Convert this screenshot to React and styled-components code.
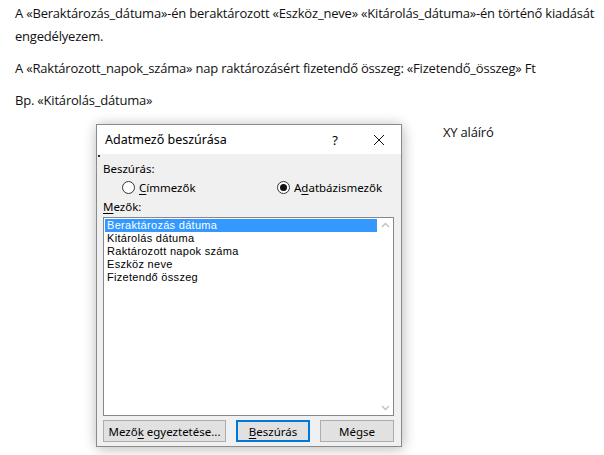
import React, { useState } from "react";
import styled, { createGlobalStyle } from "styled-components";

const GlobalStyle = createGlobalStyle`
  html, body {
    margin: 0;
    padding: 0;
    background: #ffffff;
  }
`;

const Page = styled.div`
  position: relative;
  width: 604px;
  height: 455px;
  overflow: hidden;
  background: #ffffff;
`;

const Doc = styled.div`
  padding: 2px 0 0 15px;
  font-family: "Open Sans", "Liberation Sans", sans-serif;
  font-size: 13px;
  letter-spacing: -0.2px;
  color: #111;
`;

const Para = styled.p`
  margin: 0 0 9px;
  line-height: 23px;
  white-space: nowrap;
  padding-left: ${(p) => p.$indent || 0}px;
`;

const Dialog = styled.div`
  position: absolute;
  left: 96px;
  top: 124px;
  width: 304px;
  height: 321px;
  border: 1px solid #8a8a8a;
  background: #f0f0f0;
  box-shadow: 0 0 12px rgba(0, 0, 0, 0.18), 2px 4px 14px rgba(0, 0, 0, 0.12);
  display: flex;
  flex-direction: column;
  font-family: "Noto Sans", "Liberation Sans", sans-serif;
  font-size: 11.5px;
  color: #000;
`;

const TitleBar = styled.div`
  height: 29px;
  background: #ffffff;
  display: flex;
  align-items: center;
  padding-left: 8px;
`;

const Title = styled.div`
  flex: 1;
  font-size: 12.5px;
  color: #000;
`;

const TitleButton = styled.div`
  width: 44px;
  height: 29px;
  display: flex;
  align-items: center;
  justify-content: center;
  font-size: 13px;
`;

const Body = styled.div`
  position: relative;
  flex: 1;
  display: flex;
  flex-direction: column;
  padding: 7px 7px 7px 6px;
`;

const Dot = styled.span`
  position: absolute;
  left: 1px;
  top: 1px;
  width: 2px;
  height: 2px;
  background: #333;
`;

const Label = styled.div`
  line-height: 16px;
`;

const RadioRow = styled.div`
  display: flex;
  height: 18px;
  align-items: center;
  margin: 1px 0 3px 19px;
`;

const RadioItem = styled.label`
  display: flex;
  align-items: center;
  gap: 4px;
  width: ${(p) => p.$w || "auto"};
`;

const Circle = styled.span`
  width: 11px;
  height: 11px;
  border: 1px solid #333;
  border-radius: 50%;
  background: #fff;
  display: flex;
  align-items: center;
  justify-content: center;

  &::after {
    content: "";
    width: 7px;
    height: 7px;
    border-radius: 50%;
    background: ${(p) => (p.$on ? "#111" : "transparent")};
  }
`;

const Key = styled.span`
  text-decoration: underline;
  text-underline-offset: 2px;
`;

const ListBox = styled.div`
  margin-top: 2px;
  height: 197px;
  border: 1px solid #828790;
  background: #fff;
  display: flex;
`;

const Items = styled.div`
  flex: 1;
  padding: 1px 0 0 1px;
  font-family: "Liberation Sans", "Noto Sans", sans-serif;
  font-size: 11px;
  letter-spacing: 0.3px;
`;

const Item = styled.div`
  height: 13px;
  line-height: 13px;
  padding-left: 2px;
  background: ${(p) => (p.$sel ? "#3399ff" : "transparent")};
  color: ${(p) => (p.$sel ? "#fff" : "#000")};
`;

const Scroll = styled.div`
  width: 16px;
  display: flex;
  flex-direction: column;
  justify-content: space-between;
  align-items: center;
  padding: 4px 0;
`;

const Buttons = styled.div`
  margin-top: 4px;
  display: flex;
  gap: 10px;
`;

const Button = styled.button`
  height: 22px;
  width: ${(p) => p.$w}px;
  padding: 0;
  font-family: inherit;
  font-size: 11.5px;
  color: #000;
  background: #e1e1e1;
  border: ${(p) => (p.$def ? "2px solid #0078d7" : "1px solid #adadad")};
  box-sizing: border-box;
`;

const Chevron = ({ up }) => (
  <svg width="9" height="6" viewBox="0 0 9 6">
    <path
      d={up ? "M1 5 L4.5 1.5 L8 5" : "M1 1 L4.5 4.5 L8 1"}
      fill="none"
      stroke="#c0c0c0"
      strokeWidth="1.4"
    />
  </svg>
);

const CloseIcon = () => (
  <svg width="12" height="12" viewBox="0 0 12 12">
    <path d="M1 1 L11 11 M11 1 L1 11" stroke="#111" strokeWidth="1" />
  </svg>
);

const fields = [
  "Beraktározás dátuma",
  "Kitárolás dátuma",
  "Raktározott napok száma",
  "Eszköz neve",
  "Fizetendő összeg",
];

export default function App() {
  const [selected] = useState(0);

  return (
    <Page>
      <GlobalStyle />
      <Doc>
        <Para style={{ marginBottom: 0 }}>
          A «Beraktározás_dátuma»-én beraktározott «Eszköz_neve» «Kitárolás_dátuma»-én történő kiadását
        </Para>
        <Para>engedélyezem.</Para>
        <Para>A «Raktározott_napok_száma» nap raktározásért fizetendő összeg: «Fizetendő_összeg» Ft</Para>
        <Para>Bp. «Kitárolás_dátuma»</Para>
        <Para $indent={428}>XY aláíró</Para>
      </Doc>

      <Dialog>
        <TitleBar>
          <Title>Adatmező beszúrása</Title>
          <TitleButton>?</TitleButton>
          <TitleButton>
            <CloseIcon />
          </TitleButton>
        </TitleBar>
        <Body>
          <Dot />
          <Label>Beszúrás:</Label>
          <RadioRow>
            <RadioItem $w="155px">
              <Circle />
              <span>
                <Key>C</Key>ímmezők
              </span>
            </RadioItem>
            <RadioItem>
              <Circle $on />
              <span>
                A<Key>d</Key>atbázismezők
              </span>
            </RadioItem>
          </RadioRow>
          <Label>
            <Key>M</Key>ezők:
          </Label>
          <ListBox>
            <Items>
              {fields.map((f, i) => (
                <Item key={f} $sel={i === selected}>
                  {f}
                </Item>
              ))}
            </Items>
            <Scroll>
              <Chevron up />
              <Chevron />
            </Scroll>
          </ListBox>
          <Buttons>
            <Button $w={123}>
              Mező<Key>k</Key> egyeztetése...
            </Button>
            <Button $w={74} $def>
              <Key>B</Key>eszúrás
            </Button>
            <Button $w={74}>Mégse</Button>
          </Buttons>
        </Body>
      </Dialog>
    </Page>
  );
}
